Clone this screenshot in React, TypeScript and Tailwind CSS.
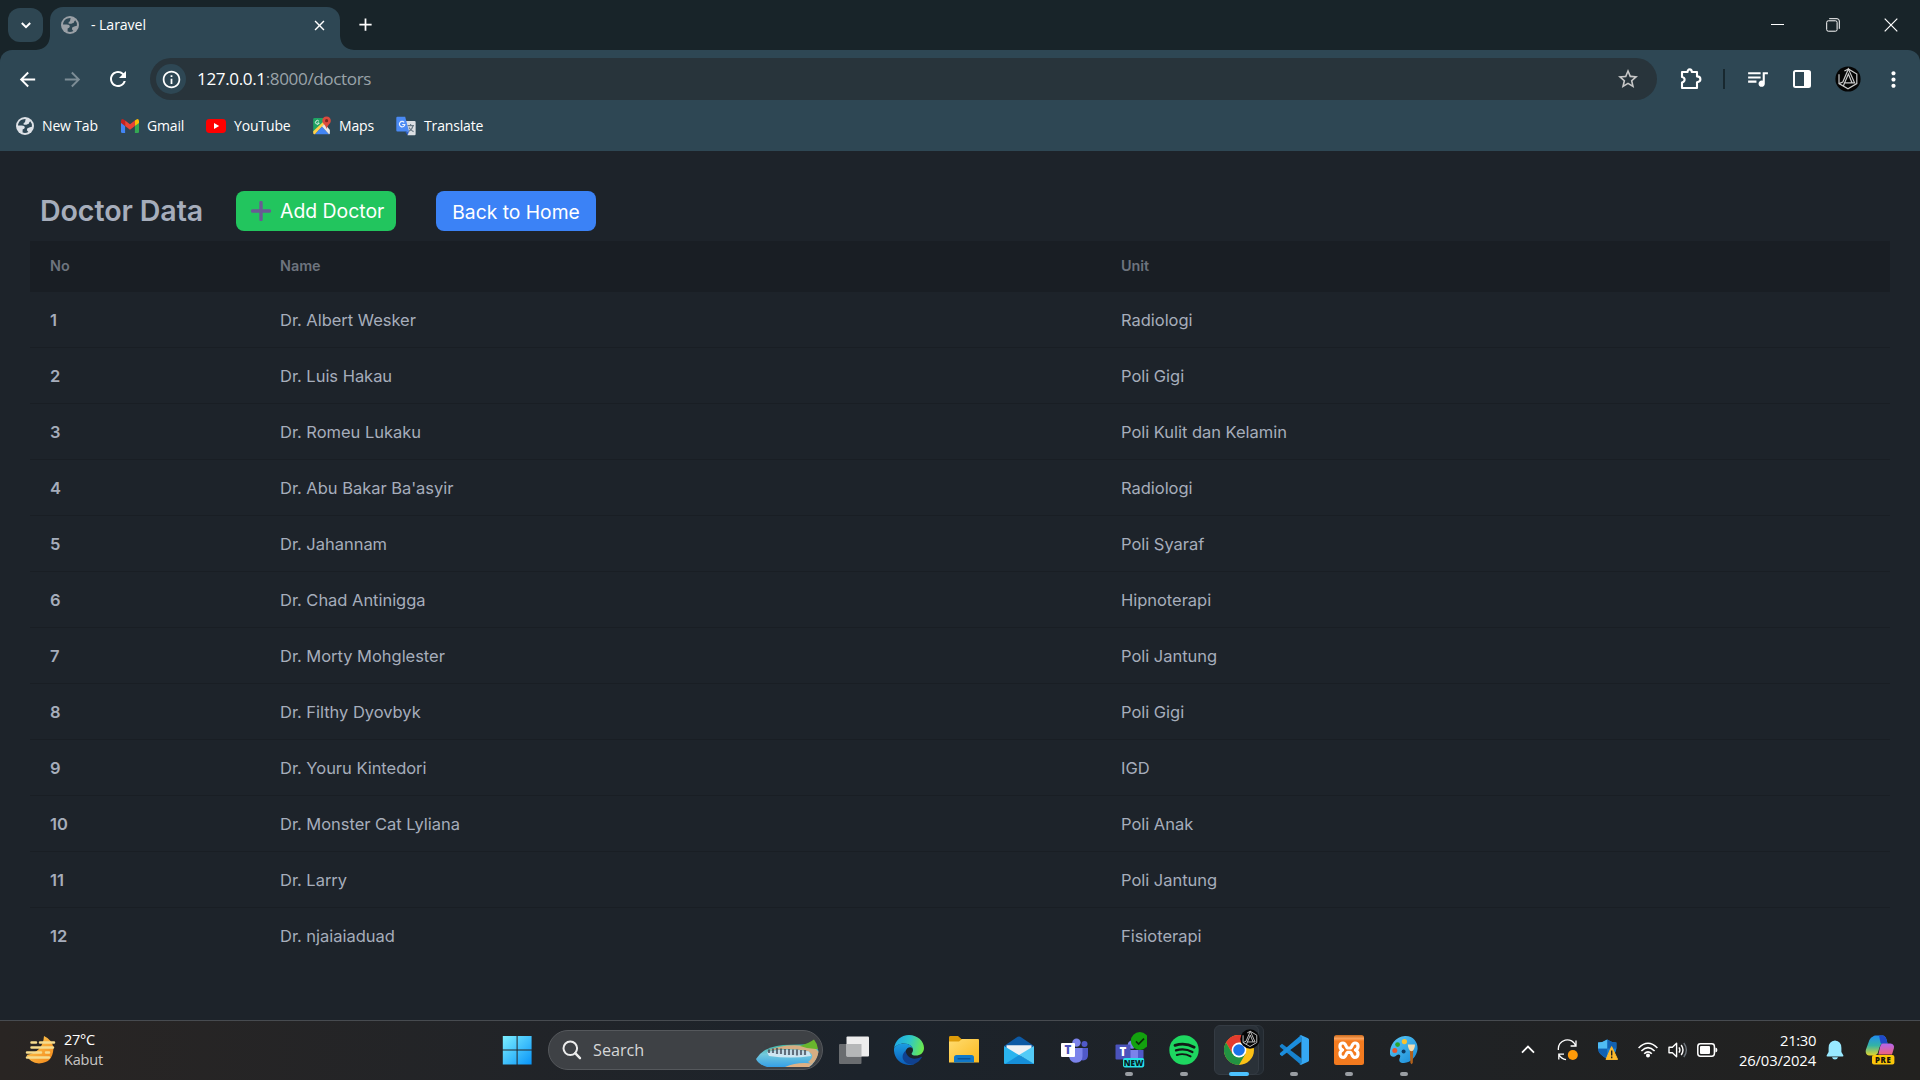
import React from "react";
import { MdArrowBack, MdArrowForward, MdRefresh, MdInfoOutline, MdStarBorder, MdQueueMusic, MdMoreVert, MdClose, MdAdd } from "react-icons/md";

const doctors = [
  ["Dr. Albert Wesker", "Radiologi"],
  ["Dr. Luis Hakau", "Poli Gigi"],
  ["Dr. Romeu Lukaku", "Poli Kulit dan Kelamin"],
  ["Dr. Abu Bakar Ba'asyir", "Radiologi"],
  ["Dr. Jahannam", "Poli Syaraf"],
  ["Dr. Chad Antinigga", "Hipnoterapi"],
  ["Dr. Morty Mohglester", "Poli Jantung"],
  ["Dr. Filthy Dyovbyk", "Poli Gigi"],
  ["Dr. Youru Kintedori", "IGD"],
  ["Dr. Monster Cat Lyliana", "Poli Anak"],
  ["Dr. Larry", "Poli Jantung"],
  ["Dr. njaiaiaduad", "Fisioterapi"],
];

function Globe({ color, land }: { color: string; land: string }) {
  return (
    <svg viewBox="0 0 18 18" className="size-[18px] shrink-0">
      <circle cx="9" cy="9" r="9" fill={color} />
      <path d="M9.6 2 C5.4 1.8 2.2 4.6 2 8.6 H5.2 Q8.8 8.4 8.8 10.6 Q8.6 12.2 6.6 12.4 L6.6 15.6 Q9.6 16.6 12.4 15 Q10 13.4 11.2 11.6 Q12.6 10.2 15.9 9.8 Q16.4 6.4 14.2 4.2 L13.2 5.4 Q13.2 7 11.4 7.2 Q9.6 8.2 7.6 7.4 Q7 5.6 9 5.2 Z" fill={land} />
    </svg>
  );
}

function HexLogo({ className }: { className: string }) {
  return (
    <svg viewBox="0 0 26 26" className={className}>
      <circle cx="13" cy="13" r="12.6" fill="#050505" />
      <g fill="none" stroke="#c9c9c9" strokeWidth="1.2">
        <path d="M4 8.2 V17.6 L13 22.8 L21.8 17.6 V8 L13.4 3 L9.4 5" />
        <path d="M4 17.6 L7.8 16 L13.4 3 L19.6 16.8 H9.6 L13.4 8 L17 16.8 M9.6 16.8 L8.4 20" />
      </g>
    </svg>
  );
}

function GmailIcon() {
  return (
    <svg viewBox="0 0 18 14" className="h-[14px] w-[18px]">
      <path d="M0 2 V12.7 Q0 14 1.3 14 H4.1 V7 Z" fill="#4285f4" />
      <path d="M18 2 V12.7 Q18 14 16.7 14 H13.9 V7 Z" fill="#34a853" />
      <path d="M13.9 1.6 V7 L18 4 V2 Q17.6 -.9 15.4 .5 Z" fill="#fbbc04" />
      <path d="M4.1 7 V1.6 L9 5.3 L13.9 1.6 V7 L9 10.7 Z" fill="#ea4335" />
      <path d="M0 2 V4 L4.1 7 V1.6 L2.6 .5 Q.4 -.9 0 2" fill="#c5221f" />
    </svg>
  );
}

function YouTubeIcon() {
  return (
    <svg viewBox="0 0 20 14" className="h-[14px] w-5">
      <rect width="20" height="14" rx="3.4" fill="#f00" />
      <path d="M8 4 L13.2 7 L8 10 Z" fill="#fff" />
    </svg>
  );
}

function MapsIcon() {
  return (
    <svg viewBox="0 0 18 19" className="h-[19px] w-[18px]">
      <path d="M1.4 2 H12 L10.4 8 L.2 16.6 V3.2 Q.2 2 1.4 2" fill="#1fa463" />
      <path d="M.2 15.2 L10 6 L11.6 8 L2 18.2 H1.4 Q.2 18.2 .2 17 Z" fill="#ffd04b" />
      <path d="M2 18.2 L9 10.4 L16 18.2 Z" fill="#4285f4" />
      <path d="M9 10.4 L11.6 7.8 L16.9 14 V17 Q16.9 18.2 16 18.2 Z" fill="#e8e8e8" />
      <path d="M5.9 5.2 A1.9 1.9 0 1 0 6.2 7 H4.4" fill="none" stroke="#e6f5ec" strokeWidth="1" />
      <path d="M13.6 .5 C10.8 .5 9.3 2.4 9.3 4.7 C9.3 7.5 12.6 8.8 13.6 13 C14.6 8.8 17.8 7.5 17.8 4.7 C17.8 2.4 16.2 .5 13.6 .5" fill="#dc4a3d" />
      <circle cx="13.6" cy="4.7" r="1.6" fill="#7a2821" />
    </svg>
  );
}

function TranslateIcon() {
  return (
    <svg viewBox="0 0 20 20" className="size-5">
      <path d="M8 5 H18.6 Q19.6 5 19.6 6 V18 Q19.6 19.2 18.6 19.2 H11.6 Z" fill="#dcdfe3" />
      <path d="M11.5 9.6 H18 M14.6 8 V9.6 M17 9.6 Q16 14 12.4 15.4 M13 11.4 Q14.4 14.2 17.6 15.6" fill="none" stroke="#6b7b86" strokeWidth="1.2" />
      <path d="M1.4 .8 H9.2 L13 15.6 H1.4 Q.3 15.6 .3 14.5 V1.9 Q.3 .8 1.4 .8" fill="#4a8af4" />
      <path d="M9 15.6 H13 L11.6 19.2 Z" fill="#2c5fc4" />
      <path d="M8.2 6.4 A2.7 2.7 0 1 0 8.8 8.5 H6.2" fill="none" stroke="#e8f0fe" strokeWidth="1.2" />
    </svg>
  );
}

function TabStrip() {
  return (
    <div className="flex h-[50px] bg-[#182429] pl-2 text-white">
      <button className="mt-2 flex h-[34px] w-[35px] items-center justify-center rounded-[12px] bg-[#2e4652]">
        <svg viewBox="0 0 10 7" className="h-[7px] w-[10px]"><path d="M.8 1 L5 5.2 L9.2 1" fill="none" stroke="#fff" strokeWidth="2" /></svg>
      </button>
      <svg viewBox="0 0 14 14" className="ml-[-7px] mt-9 size-[14px]"><path d="M14 0 V14 H0 Q13 13 14 0" fill="#2e4754" /></svg>
      <div className="mt-[7px] flex h-[43px] w-[290px] items-center rounded-t-[13px] bg-[#2e4754] pb-[7px] pl-[11px] pr-[12px]">
        <Globe color="#9aa0a6" land="#2e4754" />
        <span className="ml-3 flex-1 whitespace-pre pt-px font-['Open_Sans'] text-[14.2px] leading-none tracking-[-0.1px]">- Laravel</span>
        <MdClose className="size-[17px]" />
      </div>
      <svg viewBox="0 0 14 14" className="mt-9 size-[14px]"><path d="M0 0 V14 H14 Q1 13 0 0" fill="#2e4754" /></svg>
      <MdAdd className="ml-px mt-[14px] size-[21px]" />
      <div className="ml-auto flex h-[49px] items-center">
        <svg viewBox="0 0 13 13" className="mr-[42px] size-[13px]"><path d="M0 6.5 H13" stroke="#fff" /></svg>
        <svg viewBox="0 0 14 14" className="mr-11 size-[14px]" fill="none" stroke="#fff">
          <rect x=".7" y="2.8" width="10.4" height="10.4" rx="1.6" />
          <path d="M3.2 .7 H11 Q13.3 .7 13.3 3 V10.8" />
        </svg>
        <svg viewBox="0 0 14 14" className="mr-[22px] size-[14px]"><path d="M.7 .7 L13.3 13.3 M13.3 .7 L.7 13.3" stroke="#fff" strokeWidth="1.2" /></svg>
      </div>
    </div>
  );
}

function Toolbar() {
  return (
    <div className="bg-[#182429]">
      <div className="h-[101px] rounded-t-[12px] bg-[#2e4754] pt-2 text-white">
        <div className="flex h-[42px] items-center pl-4">
          <MdArrowBack className="size-[23px]" />
          <MdArrowForward className="ml-[22px] size-[23px] text-[#7d8d96]" />
          <MdRefresh className="ml-[22px] size-6" />
          <div className="ml-5 flex h-[42px] w-[1507px] items-center rounded-full bg-[#28343b] pl-[6px] pr-[17px]">
            <div className="flex size-[30px] items-center justify-center rounded-full bg-[#2e4754]"><MdInfoOutline className="size-[21px]" /></div>
            <span className="ml-[11px] flex-1 font-['Open_Sans'] text-[17.1px] leading-none tracking-[-0.38px] text-white">127.0.0.1<span className="text-[#9aa3a9]">:8000/doctors</span></span>
            <MdStarBorder className="size-6 text-[#c7c7c7]" />
          </div>
          <svg viewBox="0 0 22 22" className="ml-[23px] size-[22px]"><path d="M2 4 H7.6 Q7.6 1.4 9.7 1.4 Q11.8 1.4 11.8 4 H17 V8.4 Q20.4 8.6 20.4 11.3 Q20.4 14 17 14.2 V20 H2 V14.6 Q4.6 14 4.6 11.6 Q4.6 9.4 2 9 Z" fill="none" stroke="#fff" strokeWidth="2.1" strokeLinejoin="round" /></svg>
          <div className="ml-[21px] h-5 w-0.5 bg-[#18282f]" />
          <MdQueueMusic className="mb-0.5 ml-5 size-[25px]" />
          <svg viewBox="0 0 18 18" className="ml-[23px] size-[18px]"><rect x="1" y="1" width="16" height="16" rx="1.5" fill="none" stroke="#fff" strokeWidth="2" /><path d="M11 1 H17 V17 H11 Z" fill="#fff" /></svg>
          <HexLogo className="ml-[24px] size-[26px]" />
          <MdMoreVert className="ml-5 size-[25px]" />
        </div>
        <div className="mt-[10px] flex h-[31px] items-center pl-4 font-['Open_Sans'] text-[14px] leading-none tracking-[-0.15px]">
          <Globe color="#dde1e6" land="#2e4754" />
          <span className="ml-2 w-[79px]">New Tab</span>
          <GmailIcon />
          <span className="ml-2 w-[59px]">Gmail</span>
          <YouTubeIcon />
          <span className="ml-2 w-[79px]">YouTube</span>
          <MapsIcon />
          <span className="ml-2 w-[57px]">Maps</span>
          <TranslateIcon />
          <span className="ml-2">Translate</span>
        </div>
      </div>
    </div>
  );
}

function DoctorPage() {
  return (
    <main className="h-[869px] bg-[#1d232a] px-[30px] pt-10 font-['Inter'] text-[#a6adbb]">
      <div className="flex h-10 items-center pl-[10px]">
        <h1 className="w-[196px] whitespace-nowrap text-[28.6px] font-semibold leading-none tracking-[-0.1px]">Doctor Data</h1>
        <button className="flex h-10 w-40 items-center rounded-lg bg-[#22c55e] pl-[15px] text-[19.4px] text-white">
          <svg viewBox="0 0 20 20" className="mr-[9px] size-5 shrink-0"><path d="M10 1.5 V18.5 M1.5 10 H18.5" stroke="#6a5a94" strokeWidth="3.4" strokeLinecap="round" /></svg>
          <span className="whitespace-nowrap pt-0.5">Add Doctor</span>
        </button>
        <button className="ml-10 h-10 w-40 whitespace-nowrap rounded-lg bg-[#3b82f6] pt-0.5 text-[19.3px] text-white">Back to Home</button>
      </div>
      <table className="mt-[10px] w-full table-fixed border-separate border-spacing-0 text-left text-[16.5px] tracking-[-0.03px]">
        <colgroup><col className="w-[230px]" /><col className="w-[841px]" /><col /></colgroup>
        <thead>
          <tr className="h-[51px] bg-[#191e24] text-[14.4px] text-[#6e747e]">
            <th className="p-0 pb-0.5 pl-5 font-semibold">No</th>
            <th className="p-0 pb-0.5 pl-5 font-semibold">Name</th>
            <th className="p-0 pb-0.5 pl-5 font-semibold">Unit</th>
          </tr>
        </thead>
        <tbody>
          {doctors.map(([name, unit], i) => (
            <tr key={name} className="h-14 [&>*]:border-b [&>*]:border-[#191e24] last:[&>*]:border-transparent">
              <th className="p-0 pl-5 pt-px font-semibold">{i + 1}</th>
              <td className="p-0 pl-5 pt-px">{name}</td>
              <td className="p-0 pl-5 pt-px">{unit}</td>
            </tr>
          ))}
        </tbody>
      </table>
    </main>
  );
}

function TaskbarApp({ children, state = "idle" }: { children: React.ReactNode; state?: "idle" | "open" | "active" }) {
  return (
    <div className="relative flex h-[59px] w-[55px] items-center justify-center pb-0.5">
      {state === "active" && (
        <>
          <div className="absolute left-[5px] top-[4px] h-[50px] w-[47px] rounded-md border border-[#2f363d] bg-[#232a31]" />
          <div className="absolute left-[2px] top-[4px] h-[50px] w-[45px] rounded-md border border-[#343b43] bg-[#2a3138]" />
        </>
      )}
      <div className="relative">{children}</div>
      {state === "open" && <div className="absolute bottom-[4px] left-[23.5px] h-1 w-2 rounded-full bg-[#9a9ea3]" />}
      {state === "active" && <div className="absolute bottom-[4px] left-[17.5px] h-1 w-5 rounded-full bg-[#4cc2ff]" />}
    </div>
  );
}

function TeamsPeople() {
  return (
    <>
      <circle cx="24.5" cy="7" r="3" fill="#5059c9" />
      <circle cx="16.5" cy="5.6" r="4.2" fill="#7b83eb" />
      <path d="M18 11 H28 V18 Q28 23.4 23 23.4 Q18 23.4 18 18 Z" fill="#5059c9" />
      <path d="M9 11 H22.5 V19 Q22.5 25.8 16 25.8 Q10.8 25.8 9 20 Z" fill="#7b83eb" />
    </>
  );
}

function Taskbar() {
  return (
    <footer className="flex h-[60px] items-center border-t border-[#474b50] bg-linear-to-r from-[#292523] via-[#1c232b] via-45% to-[#22211f] text-white">
      <div className="flex w-[502px] items-center pb-0.5 pl-6">
        <svg viewBox="0 0 32 30" className="h-[30px] w-8">
          <defs><linearGradient id="sun" x1="0" y1="0" x2="1" y2="1"><stop stopColor="#ffd25a" /><stop offset="1" stopColor="#f28416" /></linearGradient></defs>
          <path d="M20 1 Q29 5 29.4 14 Q28.6 28 15 28.4 Q6 28 2.6 20 Q19 17 20 1" fill="url(#sun)" />
          <path d="M7.5 7.5 H12 M16 7.5 H30 M7.5 12.5 H29 M3 17.5 H17 M22 17.5 H25 M3 22.5 H25" stroke="#f6dc8d" strokeWidth="2.5" strokeLinecap="round" />
        </svg>
        <div className="ml-2 font-['Open_Sans'] text-[14.5px] leading-5">
          <div className="tracking-[-0.3px]">27°C</div>
          <div className="tracking-[-0.2px] text-[#c9c6c4]">Kabut</div>
        </div>
      </div>
      <svg viewBox="0 0 30 30" className="mb-px size-[30px]">
        <defs><linearGradient id="win" x1="0" y1="0" x2="1" y2="1"><stop stopColor="#7cefff" /><stop offset="1" stopColor="#0894f8" /></linearGradient></defs>
        <path d="M.8 1 H14.6 V14.6 H.8 Z M15.6 1 H29.6 V14.6 H15.6 Z M.8 15.6 H14.6 V29.6 H.8 Z M15.6 15.6 H29.6 V29.6 H15.6 Z" fill="url(#win)" />
      </svg>
      <div className="relative mb-px ml-4 flex h-10 w-[275px] items-center overflow-hidden rounded-full border border-[#55585c] bg-[#3e4145] pl-[13px]">
        <svg viewBox="0 0 20 20" className="size-5"><circle cx="8.3" cy="8.3" r="6.8" fill="none" stroke="#ececec" strokeWidth="2" /><path d="M13.2 13.2 L18 18.2" stroke="#ececec" strokeWidth="2.4" strokeLinecap="round" /></svg>
        <span className="ml-[11px] pt-px font-['Open_Sans'] text-[16.2px] text-[#d6d7d8]">Search</span>
        <svg viewBox="0 0 64 28" className="absolute bottom-[2px] right-[3px] h-7 w-16">
          <defs>
            <linearGradient id="lagoon" x1="0" y1="0" x2="0" y2="1"><stop stopColor="#3cb5a0" /><stop offset=".45" stopColor="#73c9dc" /><stop offset="1" stopColor="#359fe6" /></linearGradient>
          </defs>
          <path d="M1 20 Q8 8 28 6 L60 5 L63.5 12 Q61 24 54 28 H12 Q3 25 1 20" fill="url(#lagoon)" />
          <path d="M12 12 Q26 5.5 44 6.5 L60 9 L63.5 13 Q62 21 57 25 L53 23 Q62 16 52 12 Q32 8 12 12" fill="#d6ae82" />
          <path d="M12 13 Q32 8.5 54 12.5 L56 17 Q36 20 14 17 Z" fill="#cfe6f2" />
          <path d="M14 10.5 V14 M18 9.5 V14 M22 9 V15 M26 9.5 V15 M30 10 V16 M34 10 V16 M38 10.5 V16 M42 10.5 V16.5 M46 11 V16 M50 11 V16" stroke="#3c4654" strokeWidth="2.2" opacity=".75" />
          <path d="M30 28 Q42 22.5 58 24.5 L54 28 Z" fill="#e0b184" />
          <path d="M45 7 Q55 3.5 59 .5 Q62 4 63 10 Q54 10.5 45 7" fill="#69b52d" />
        </svg>
      </div>
      <div className="ml-[3.5px] flex">
        <TaskbarApp>
          <svg viewBox="0 0 30 28" className="h-7 w-[30px]"><rect y="8" width="22.5" height="20" rx="1" fill="#6a6d70" /><rect x="7.5" y=".5" width="22.5" height="20" rx="1" fill="#ededed" /><path d="M7.5 8 H22.5 V20.5 H7.5 Z" fill="#b5b7b8" /></svg>
        </TaskbarApp>
        <TaskbarApp>
          <svg viewBox="0 0 30 30" className="size-[30px]">
            <defs>
              <linearGradient id="edgeTop" x1="0" y1=".3" x2="1" y2=".5"><stop stopColor="#1ea7e8" /><stop offset=".5" stopColor="#2ec7c9" /><stop offset="1" stopColor="#6cea4b" /></linearGradient>
              <linearGradient id="edgeLow" x1="0" y1="0" x2="0" y2="1"><stop stopColor="#1b9de2" /><stop offset="1" stopColor="#0b5cb8" /></linearGradient>
            </defs>
            <path d="M0 13.6 C1 5.5 7 0 15 0 C24 0 30 6.6 30 13 C30 18 26 20.6 22 20.6 C18.8 20.6 17.4 19.4 17.6 18.4 C18.4 17.4 19 16.4 19 15 C19 11.6 15.4 8.6 10 8.6 C5 8.6 1.6 11 0 13.6" fill="url(#edgeTop)" />
            <path d="M0 13.6 C1.6 10.6 5 8.6 9.6 8.6 C14 8.6 17.4 10.4 18.6 13 C16.4 11.4 12.6 12 11.4 16.6 C10.6 22.6 15 28 20.4 29 C18.6 29.8 17 30 15 30 C6 30 -.6 22.6 0 13.6" fill="url(#edgeLow)" />
            <path d="M11.6 15.6 C9.2 18 7.6 21.4 9.2 24.6 C11.2 29 17 30.6 20.4 29 C23.6 27.8 26 25.6 27.8 22.6 C28 22 27.6 21.6 27 22 C19.8 25.6 12.6 23.2 11.6 15.6" fill="#10418f" />
          </svg>
        </TaskbarApp>
        <TaskbarApp>
          <svg viewBox="0 0 30 27" className="h-[27px] w-[30px]">
            <defs><linearGradient id="fold" x1="0" y1="0" x2="1" y2="1"><stop stopColor="#ffdc70" /><stop offset="1" stopColor="#fbb91e" /></linearGradient></defs>
            <path d="M0 1.4 Q0 0 1.4 0 H9 L12.4 3 H28.6 Q30 3 30 4.4 V8 H0 Z" fill="#dd9b09" />
            <path d="M0 5.6 H10 L13 3 H28.6 Q30 3 30 4.4 V26.4 H0 Z" fill="url(#fold)" />
            <path d="M5 26.4 V21.6 Q5 19 7.6 19 H22.6 Q25 19 25 21.6 V26.4 Z" fill="#1179c9" /><path d="M8.6 22.8 H21.4" stroke="#0a4f92" strokeWidth="1.3" />
          </svg>
        </TaskbarApp>
        <TaskbarApp>
          <svg viewBox="0 0 30 28" className="h-7 w-[30px]">
            <path d="M0 10 L13.6 .8 Q15 0 16.4 .8 L30 10 L15 20 Z" fill="#0c59a4" /><path d="M2.5 9.2 H27.5 V17 L15 20 L2.5 17 Z" fill="#eef1f4" />
            <path d="M0 10 L15 19 L30 27.6 Q29.6 28 29 28 H1 Q0 28 0 27 Z" fill="#2ab4ef" /><path d="M30 10 L15 19 L30 28 Z" fill="#53cbf7" /><path d="M15 19 L30 28 H1 Z" fill="#168fd9" />
          </svg>
        </TaskbarApp>
        <TaskbarApp>
          <svg viewBox="0 0 29 26" className="h-[26px] w-[29px]">
            <TeamsPeople /><rect x="1" y="6" width="14" height="14" rx="1" fill="#fff" />
            <text x="8" y="17" textAnchor="middle" fontFamily="Open Sans" fontSize="11.5" fontWeight="800" fill="#4b53bc">T</text>
          </svg>
        </TaskbarApp>
        <TaskbarApp state="open">
          <svg viewBox="0 0 36 36" className="h-9 w-9">
            <g transform="translate(4.5 7)"><TeamsPeople /></g><rect x="4.5" y="12.5" width="15" height="15" rx="1" fill="#4b53bc" />
            <text x="12" y="23.5" textAnchor="middle" fontFamily="Open Sans" fontSize="11.5" fontWeight="800" fill="#fff">T</text>
            <circle cx="28.8" cy="9" r="9" fill="#13a10e" /><path d="M25 9.4 L27.6 12 L33 6.6" fill="none" stroke="#0a2e09" strokeWidth="1.7" />
            <rect x="12" y="26" width="21.2" height="9.4" rx="1.8" fill="#27e2e8" />
            <text x="22.6" y="33.6" textAnchor="middle" fontFamily="Open Sans" fontSize="8.2" fontWeight="800" fill="#061c1e">NEW</text>
          </svg>
        </TaskbarApp>
        <TaskbarApp state="open">
          <svg viewBox="0 0 30 30" className="size-[30px]"><circle cx="15" cy="15" r="14.7" fill="#1ed760" /><g fill="none" stroke="#111a16" strokeLinecap="round"><path d="M6 10.4 Q16 7.2 25.2 12.2" strokeWidth="2.8" /><path d="M7 15.4 Q15.6 12.8 23.4 17" strokeWidth="2.3" /><path d="M7.8 20 Q15 17.8 21.6 21.4" strokeWidth="1.9" /></g></svg>
        </TaskbarApp>
        <TaskbarApp state="active">
          <svg viewBox="0 0 30 30" className="size-[30px]">
            <circle cx="15" cy="15" r="15" fill="#fbc116" />
            <path d="M2 7.5 A15 15 0 0 1 28 7.5 H15 L8.5 18.75 Z" fill="#e33b2e" />
            <path d="M2 7.5 A15 15 0 0 0 15 30 L21.5 18.75 L8.5 18.75 Z" fill="#229342" />
            <circle cx="15" cy="15" r="7.4" fill="#fff" /><circle cx="15" cy="15" r="5.8" fill="#1a73e8" />
          </svg>
          <HexLogo className="absolute -right-[6px] -top-[6px] size-5" />
        </TaskbarApp>
        <TaskbarApp state="open">
          <svg viewBox="0 0 30 30" className="size-[30px]">
            <path d="M1 10.4 L3 8.8 L22.5 23.4 V29.5 L21 29 L.8 11.8 Z" fill="#1783cf" />
            <path d="M1 19.6 L3 21.2 L22.5 6.6 V.5 L21 1 L.8 18.2 Z" fill="#1b8ede" />
            <path d="M22.3 .2 L29 3.2 Q30 3.8 30 4.6 V25.4 Q30 26.2 29 26.8 L22.3 29.8 Q21 30 20.4 29 Q22.4 29.4 22.4 27.4 V2.6 Q22.4 .6 20.4 1 Q21 0 22.3 .2" fill="#35a8f4" />
          </svg>
        </TaskbarApp>
        <TaskbarApp state="open">
          <svg viewBox="0 0 30 30" className="size-[30px]">
            <defs><linearGradient id="xp" x1="0" y1="0" x2="0" y2="1"><stop stopColor="#c9691c" /><stop offset=".12" stopColor="#ffa35a" /><stop offset=".2" stopColor="#f47c20" /><stop offset="1" stopColor="#f37a1f" /></linearGradient></defs>
            <rect width="30" height="30" rx="2.5" fill="url(#xp)" />
            <path d="M9 8 C5 8 5 13.6 8.6 15 C5 16.4 5 22.4 9.4 22.4 C12.4 22.4 12 18 13.4 17.4 H16.6 C18 18 17.6 22.4 20.6 22.4 C25 22.4 25 16.4 21.4 15 C25 13.6 25 8 21 8 C18 8 18 12.4 16.6 13 H13.4 C12 12.4 12 8 9 8 Z" fill="none" stroke="#fff" strokeWidth="3.2" strokeLinejoin="round" />
          </svg>
        </TaskbarApp>
        <TaskbarApp state="open">
          <svg viewBox="0 0 30 30" className="size-[30px]">
            <defs><linearGradient id="pal" x1="0" y1="0" x2="1" y2="1"><stop stopColor="#5ccbf8" /><stop offset="1" stopColor="#1688d5" /></linearGradient></defs>
            <path d="M16 1 C24 .6 29 7 28.6 14 C28 21 22 27.6 15 28 C10 28.2 9.6 25 11 22.4 C12 20 10 18.4 7.6 20.2 C5.4 22.4 1.6 22.4 1 19 C.2 10 7 1.6 16 1" fill="url(#pal)" />
            <circle cx="15.4" cy="6.6" r="2.6" fill="#f9c22e" /><circle cx="8.6" cy="9.6" r="2.4" fill="#2ba52a" /><circle cx="5.8" cy="15.6" r="2.5" fill="#e8562f" /><circle cx="14.6" cy="16.6" r="2" fill="#0d3c66" />
            <path d="M20.8 14 H24.2 L23.8 27.6 Q22.6 31 21.4 27.6 Z" fill="#b2611c" /><path d="M18.8 9.4 H26 Q25.6 15.6 22.5 16.2 Q19.2 15.6 18.8 9.4" fill="#f3ddb2" />
          </svg>
        </TaskbarApp>
      </div>
      <div className="ml-auto flex items-center pb-0.5">
        <svg viewBox="0 0 14 9" className="h-[9px] w-[14px]"><path d="M1 7.6 L7 1.6 L13 7.6" fill="none" stroke="#fff" strokeWidth="1.8" /></svg>
        <svg viewBox="0 0 22 22" className="ml-[22px] size-[22px]"><path d="M1.4 11 A9 9 0 0 1 18.8 6.8 M19 1.6 V7 H13.6 M1.8 20.6 V15.2 H7 M2 15.8 Q4.6 19.8 9 20.6" fill="none" stroke="#fff" strokeWidth="1.3" /><circle cx="15.8" cy="16" r="5" fill="#ff9a08" /></svg>
        <svg viewBox="0 0 20 21" className="ml-[19px] h-[21px] w-5">
          <path d="M0 3.6 Q5 3.6 9.2 .6 Q13.4 3.6 18.4 3.6 V9.6 Q18 16 9.2 19.6 Q.4 16 0 9.6 Z" fill="#1c7fd0" /><path d="M9.2 .6 Q13.4 3.6 18.4 3.6 V9.6 H9.2 Z M9.2 9.6 H0 Q.8 16.4 9.2 19.6 Z" fill="#1161b2" /><path d="M0 3.6 Q5 3.6 9.2 .6 V9.6 H0 Z" fill="#4fbbf3" />
          <path d="M13.6 7.6 L19.6 20.4 H8 Z" fill="#fdb92c" stroke="#fdb92c" strokeLinejoin="round" /><path d="M13.7 11.4 V16.4 M13.7 17.6 V19.2" stroke="#222" strokeWidth="1.4" />
        </svg>
        <svg viewBox="0 0 20 16" className="ml-5 h-4 w-5" fill="none" stroke="#fff" strokeWidth="1.6"><path d="M.6 6 Q10 -3.4 19.4 6 M3.4 9 Q10 2.2 16.6 9 M6.2 11.8 Q10 8 13.8 11.8" /><circle cx="10" cy="13.6" r="1.2" fill="#fff" /></svg>
        <svg viewBox="0 0 20 18" className="ml-[10px] h-[18px] w-5" fill="none" stroke="#fff" strokeWidth="1.4"><path d="M1 6.2 H4.4 L8.6 2.2 V15.8 L4.4 11.8 H1 Z M11 6.4 Q12.8 9 11 11.6 M13.2 4 Q16.8 9 13.2 14" strokeLinejoin="round" /><path d="M15.8 2 Q21 9 15.8 16" stroke="#6d747b" /></svg>
        <svg viewBox="0 0 21 14" className="ml-[9px] h-[14px] w-[21px]"><rect x=".8" y=".8" width="16.6" height="12.4" rx="2.6" fill="none" stroke="#fff" strokeWidth="1.5" /><rect x="3" y="3" width="10" height="8" rx="1" fill="#fff" /><path d="M18.4 4.4 Q20.4 4.6 20.4 7 Q20.4 9.4 18.4 9.6 Z" fill="#fff" /></svg>
        <div className="ml-5 w-[78px] text-right font-['Open_Sans'] text-[14.8px] leading-5 tracking-[-0.15px]">
          <div className="tracking-[-0.35px]">21:30</div>
          <div>26/03/2024</div>
        </div>
        <svg viewBox="0 0 18 20" className="ml-[10px] h-5 w-[18px]"><path d="M9 .6 Q15.4 1.2 15.4 8 V12 L17.4 15.4 Q17.6 16.4 16.6 16.4 H1.4 Q.4 16.4 .6 15.4 L2.6 12 V8 Q2.6 1.2 9 .6 M6 17.2 H12 Q11.4 19.6 9 19.6 Q6.6 19.6 6 17.2" fill="#99e9ff" /></svg>
        <svg viewBox="0 0 30 30" className="ml-[21px] mr-[25px] size-[30px]">
          <defs>
            <linearGradient id="cpA" x1="0" y1="0" x2="0" y2="1"><stop stopColor="#218df0" /><stop offset=".5" stopColor="#33b3a5" /><stop offset="1" stopColor="#e2d42d" /></linearGradient>
            <linearGradient id="cpB" x1="0" y1="0" x2="0" y2="1"><stop stopColor="#b266ee" /><stop offset="1" stopColor="#f0617c" /></linearGradient>
          </defs>
          <path d="M8 1.4 Q9 .6 10.4 .6 H18 Q21 1 22 6.6 L22.6 8.6 H17.6 Q15.6 9 14.6 12 L12.6 18.6 Q11.6 20.4 8.6 20.4 H4 Q0 20 .8 15 L4.4 5 Q5.8 2 8 1.4" fill="url(#cpA)" />
          <path d="M14 .6 H18 Q21 1 22 6.6 L22.6 8.6 H17.6 Q16.2 9 15.6 8 Z" fill="#2049c9" />
          <path d="M17.6 8.6 H25.4 Q30 9.4 28.8 13.6 L27 19.6 H13.4 L15 12 Q15.8 9 17.6 8.6" fill="url(#cpB)" />
          <rect x="7" y="20" width="22.4" height="9.4" rx="2" fill="#fbc60a" />
          <text x="18.2" y="27.6" textAnchor="middle" fontFamily="Open Sans" fontSize="7.8" fontWeight="800" letterSpacing=".6" fill="#15130a">PRE</text>
        </svg>
      </div>
    </footer>
  );
}

export default function App() {
  return (
    <div className="h-[1080px] w-[1920px] overflow-hidden">
      <TabStrip />
      <Toolbar />
      <DoctorPage />
      <Taskbar />
    </div>
  );
}
